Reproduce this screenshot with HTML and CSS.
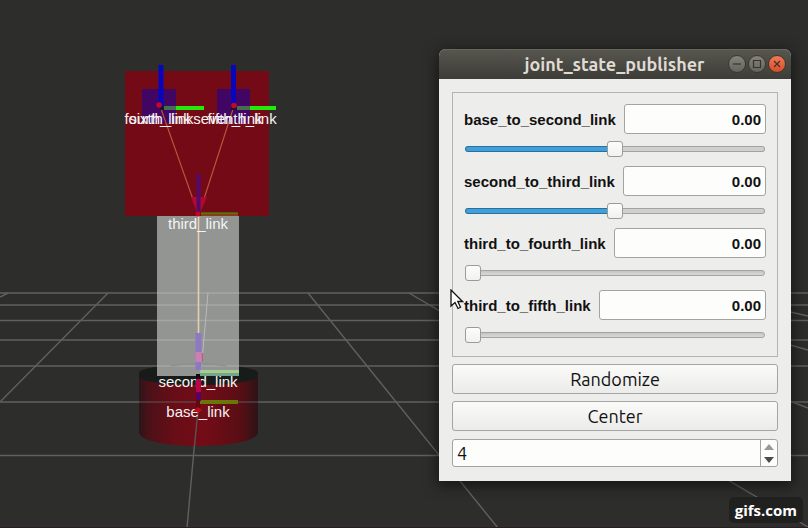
FILE: index.html
```html
<!DOCTYPE html>
<html lang="en">
<head>
<meta charset="utf-8">
<title>joint_state_publisher</title>
<link rel="stylesheet" href="styles.css">
</head>
<body>
<main class="desktop">
  <svg class="scene" viewBox="0 0 808 528" preserveAspectRatio="xMinYMin slice" role="img" aria-label="Robot model">
    <defs>
      <linearGradient id="drum" x1="0" x2="1" y1="0" y2="0">
        <stop offset="0" stop-color="#2b1618"/>
        <stop offset=".08" stop-color="#4b1118"/>
        <stop offset=".3" stop-color="#690d16"/>
        <stop offset=".55" stop-color="#730c17"/>
        <stop offset=".85" stop-color="#5a0e15"/>
        <stop offset="1" stop-color="#2b1416"/>
      </linearGradient>
    </defs>

    <!-- ground grid -->
    <g class="grid">
      <path d="M0 293H808M0 305H808M0 320.500H808M0 340H808M0 366H808M0 402H808M0 455.500H808"/>
      <path d="M8 293L0 297M108 293L0 402M208 293L187 528M308 293L498 528M409 293L808 527M508 293L808 408M608 293L808 350M708 293L808 316"/>
    </g>

    <!-- base and second link drum -->
    <path d="M139 375V433C141 441 166 446 198 446S256 441 258 433V375Z" fill="url(#drum)"/>
    <path d="M139 373C139 362 258 362 258 373V377C250 383 225 385 198 385S146 383 139 377Z" fill="#171b19"/>
    <path class="grid" d="M139 402H258" opacity=".6"/>
    <path class="grid" d="M198 410L194.500 446" opacity=".8"/>

    <!-- third link column -->
    <rect x="157" y="215" width="82" height="161" fill="#939592"/>
    <path d="M157 293H239M157 305H239M157 320.500H239M157 340H239M157 366H239" stroke="#a5a7a4" stroke-width="1.500"/>
    <path d="M208 293L201 372" stroke="#b9bbb8"/>
    <path d="M170 366Q198 361 227 366" stroke="#8b8d8a" fill="none"/>

    <!-- upper body -->
    <rect x="125" y="71" width="144" height="145" fill="#730a16"/>
    <rect x="142" y="89" width="34" height="34" fill="#410563"/>
    <rect x="217" y="89" width="33" height="34" fill="#410563"/>
    <path d="M160 106L195 205M234 106L202 205" stroke="#b8533b" stroke-width="1.200"/>
    <path d="M191 197L207 197L200 213H197Z" fill="#b00830"/>
    <path d="M198.500 174V212" stroke="#530a6c" stroke-width="4"/>
    <path d="M201 213.500H238" stroke="#58700d" stroke-width="2.500"/>
    <path d="M201 215.500H238" stroke="#b02720"/>
    <path d="M198.500 216V334" stroke="#e4d0b1" stroke-width="1.600"/>
    <circle cx="198" cy="214" r="2.500" fill="#bc0820"/>

    <!-- wheel axes -->
    <g stroke-width="4">
      <path d="M162 108H178M234 108H252" stroke="#456d51"/>
      <path d="M176 108H204M250 108H276" stroke="#24ea0b"/>
    </g>
    <path d="M161 65V107M233.500 65V107" stroke="#0806bd" stroke-width="5"/>
    <path d="M160 108H164M231 108H237" stroke="#171527" stroke-width="4"/>
    <circle cx="159" cy="105" r="2.800" fill="#c40726"/>
    <circle cx="234" cy="105.500" r="2.800" fill="#c40726"/>

    <g class="frame-name">
      <text x="159" y="124">fourth_link</text>
      <text x="160" y="124">sixth_link</text>
      <text x="235" y="124">fifth_link</text>
      <text x="235" y="124">seventh_link</text>
      <text x="198" y="229">third_link</text>
      <text x="198" y="387">second_link</text>
      <text x="198" y="417">base_link</text>
    </g>

    <!-- lower axes -->
    <path d="M198.500 333V370" stroke="#8d79c2" stroke-width="6"/>
    <path d="M198.500 352V362" stroke="#cd80b0" stroke-width="6"/>
    <path d="M202.500 353V362" stroke="#c4587f"/>
    <path d="M200 371.500H239" stroke="#a2cd91" stroke-width="3"/>
    <path d="M200 374.500H239" stroke="#69ac88" stroke-width="2"/>
    <path d="M200 402H238" stroke="#6b7509" stroke-width="4"/>
    <path d="M198 374V380" stroke="#130810" stroke-width="4"/>
    <path d="M198.500 379V392" stroke="#bc0544" stroke-width="5"/>
    <path d="M198.500 392V401" stroke="#580268" stroke-width="5"/>
    <path d="M198 400V409" stroke="#650811" stroke-width="4"/>
    <path d="M194 410L198 407L202 410L198 413Z" fill="#bd0b1c"/>
  </svg>

  <section class="window" aria-labelledby="window-title">
    <header class="titlebar">
      <h1 id="window-title">joint_state_publisher</h1>
      <div class="window-buttons">
        <button type="button" class="wm" aria-label="Minimize"><svg viewBox="0 0 16 16"><path d="M4 8H12"/></svg></button>
        <button type="button" class="wm" aria-label="Maximize"><svg viewBox="0 0 16 16"><path d="M4.500 4.500H11.500V11.500H4.500Z"/></svg></button>
        <button type="button" class="wm wm-close" aria-label="Close"><svg viewBox="0 0 16 16"><path d="M5 5L11 11M11 5L5 11"/></svg></button>
      </div>
    </header>
    <form class="content">
      <div class="joints">
        <div class="joint">
          <div class="joint-head"><label for="j1">base_to_second_link</label><input id="j1" type="text" value="0.00" readonly></div>
          <input type="range" class="slider half" aria-label="base_to_second_link position" min="0" max="100" value="50">
        </div>
        <div class="joint">
          <div class="joint-head"><label for="j2">second_to_third_link</label><input id="j2" type="text" value="0.00" readonly></div>
          <input type="range" class="slider half" aria-label="second_to_third_link position" min="0" max="100" value="50">
        </div>
        <div class="joint">
          <div class="joint-head"><label for="j3">third_to_fourth_link</label><input id="j3" type="text" value="0.00" readonly></div>
          <input type="range" class="slider" aria-label="third_to_fourth_link position" min="0" max="100" value="0">
        </div>
        <div class="joint">
          <div class="joint-head"><label for="j4">third_to_fifth_link</label><input id="j4" type="text" value="0.00" readonly></div>
          <input type="range" class="slider" aria-label="third_to_fifth_link position" min="0" max="100" value="0">
        </div>
      </div>
      <button type="button" class="action">Randomize</button>
      <button type="button" class="action">Center</button>
      <div class="spin">
        <input type="text" inputmode="numeric" value="4" aria-label="Rows">
        <div class="steps">
          <button type="button" aria-label="Increase" disabled><svg viewBox="0 0 10 6"><path d="M0 6L5 0L10 6Z" fill="#999"/></svg></button>
          <button type="button" aria-label="Decrease"><svg viewBox="0 0 10 6"><path d="M0 0H10L5 6Z" fill="#4b4b4b"/></svg></button>
        </div>
      </div>
    </form>
  </section>

  <svg class="pointer" viewBox="0 0 14 21" aria-hidden="true"><path d="M1 1V17L5 13.500L8 19.500L10.500 18.300L7.800 12.500H12.500Z" fill="#fff" stroke="#111" stroke-width="1.300"/></svg>
  <a class="badge" href="#">gifs.com</a>
</main>
</body>
</html>
```
FILE: styles.css
```css
* { box-sizing: border-box; }

body {
  margin: 0;
  background: #2d2d2b;
  font-family: Ubuntu, "Noto Sans", sans-serif;
}

.desktop {
  position: relative;
  min-height: 100vh;
  overflow: hidden;
  border-bottom: 1px solid #2a1c29;
}

.scene {
  position: absolute;
  inset: 0;
  width: 100%;
  height: 100%;
}

.grid {
  fill: none;
  stroke: #60605e;
  stroke-width: 1.4;
}

.frame-name {
  fill: #f6f3f3;
  font: 15px "Liberation Sans", Arial, sans-serif;
  text-anchor: middle;
}

.window {
  position: absolute;
  left: 439px;
  top: 49px;
  width: 352px;
  border-radius: 7px 7px 0 0;
  background: #ededec;
  box-shadow: 0 3px 14px 2px rgba(0, 0, 0, .5);
}

.titlebar {
  display: flex;
  align-items: center;
  height: 30px;
  padding-right: 5px;
  border-radius: 7px 7px 0 0;
  background: linear-gradient(#57564f, #3d3c37);
  box-shadow: inset 0 1px #66655e;
}

.titlebar h1 {
  flex: 1;
  margin: 0;
  padding-left: 62px;
  color: #dfdbd2;
  font-size: 18px;
  font-weight: 700;
  line-height: 30px;
  text-align: center;
}

.window-buttons {
  display: flex;
  gap: 2px;
}

.wm {
  width: 18px;
  height: 18px;
  padding: 0;
  border: 1px solid #393833;
  border-radius: 50%;
  background: linear-gradient(#85837b, #64635c);
}

.wm svg {
  display: block;
  width: 16px;
  height: 16px;
  fill: none;
  stroke: #35342f;
  stroke-width: 1.2;
}

.wm-close {
  background: linear-gradient(#f27955, #dd4b28);
}

.content {
  display: flex;
  flex-direction: column;
  gap: 7px;
  padding: 13px 13px 14px;
}

.joints {
  display: flex;
  flex-direction: column;
  gap: 9px;
  padding: 11px 11px 13px;
  border: 1px solid #b3b3b1;
}

.joint {
  display: flex;
  flex-direction: column;
  gap: 7px;
}

.joint-head {
  display: flex;
  align-items: center;
  gap: 8px;
}

.joint-head label,
.joint-head input {
  color: #111;
  font: bold 15px "Liberation Sans", Arial, sans-serif;
}

.joint-head input {
  flex: 1;
  min-width: 0;
  height: 30px;
  padding: 0 4px;
  border: 1px solid #a3a3a1;
  border-radius: 3px;
  background: #fdfdfc;
  text-align: right;
}

.slider {
  appearance: none;
  height: 16px;
  margin: 0 1px;
  background: none;
}

.slider::-webkit-slider-runnable-track {
  height: 6px;
  border: 1px solid #a3a3a1;
  border-radius: 3px;
  background: linear-gradient(#c6c6c4, #d8d8d6);
}

.half::-webkit-slider-runnable-track {
  border-color: transparent;
  background:
    linear-gradient(90deg, #3fa0da 50%, #d0d0ce 50%) padding-box,
    linear-gradient(90deg, #2b6f9d 50%, #a3a3a1 50%) border-box;
}

.slider::-webkit-slider-thumb {
  appearance: none;
  width: 16px;
  height: 16px;
  margin: -6px 0 0 -1px;
  border: 1px solid #9b9b99;
  border-radius: 3px;
  background: linear-gradient(#fdfdfc, #f1f1ef);
}

.half::-webkit-slider-thumb {
  margin-left: 0;
}

.action {
  height: 30px;
  border: 1px solid #a5a5a3;
  border-radius: 3px;
  background: linear-gradient(#fafaf9, #ebebe9);
  color: #111;
  font: inherit;
  font-size: 18px;
  line-height: 24px;
}

.spin {
  display: flex;
  height: 28px;
  margin-top: 1px;
  border: 1px solid #a3a3a1;
  border-radius: 3px;
  background: #fdfdfc;
}

.spin input {
  flex: 1;
  min-width: 0;
  padding: 0 4px;
  border: 0;
  background: none;
  color: #111;
  font: inherit;
  font-size: 18px;
}

.steps {
  display: flex;
  flex-direction: column;
  width: 17px;
  border-left: 1px solid #a3a3a1;
}

.steps button {
  flex: 1;
  display: grid;
  place-items: center;
  padding: 0;
  border: 0;
  background: none;
}

.steps svg {
  width: 10px;
  height: 6px;
}

.pointer {
  position: absolute;
  left: 450px;
  top: 289px;
  width: 14px;
  height: 21px;
}

.badge {
  position: absolute;
  right: 5px;
  bottom: 4px;
  padding: 0 6px;
  border-radius: 5px;
  background: #20211f;
  color: #fff;
  font: bold 15px/26px "Open Sans", sans-serif;
  text-decoration: none;
}
```
